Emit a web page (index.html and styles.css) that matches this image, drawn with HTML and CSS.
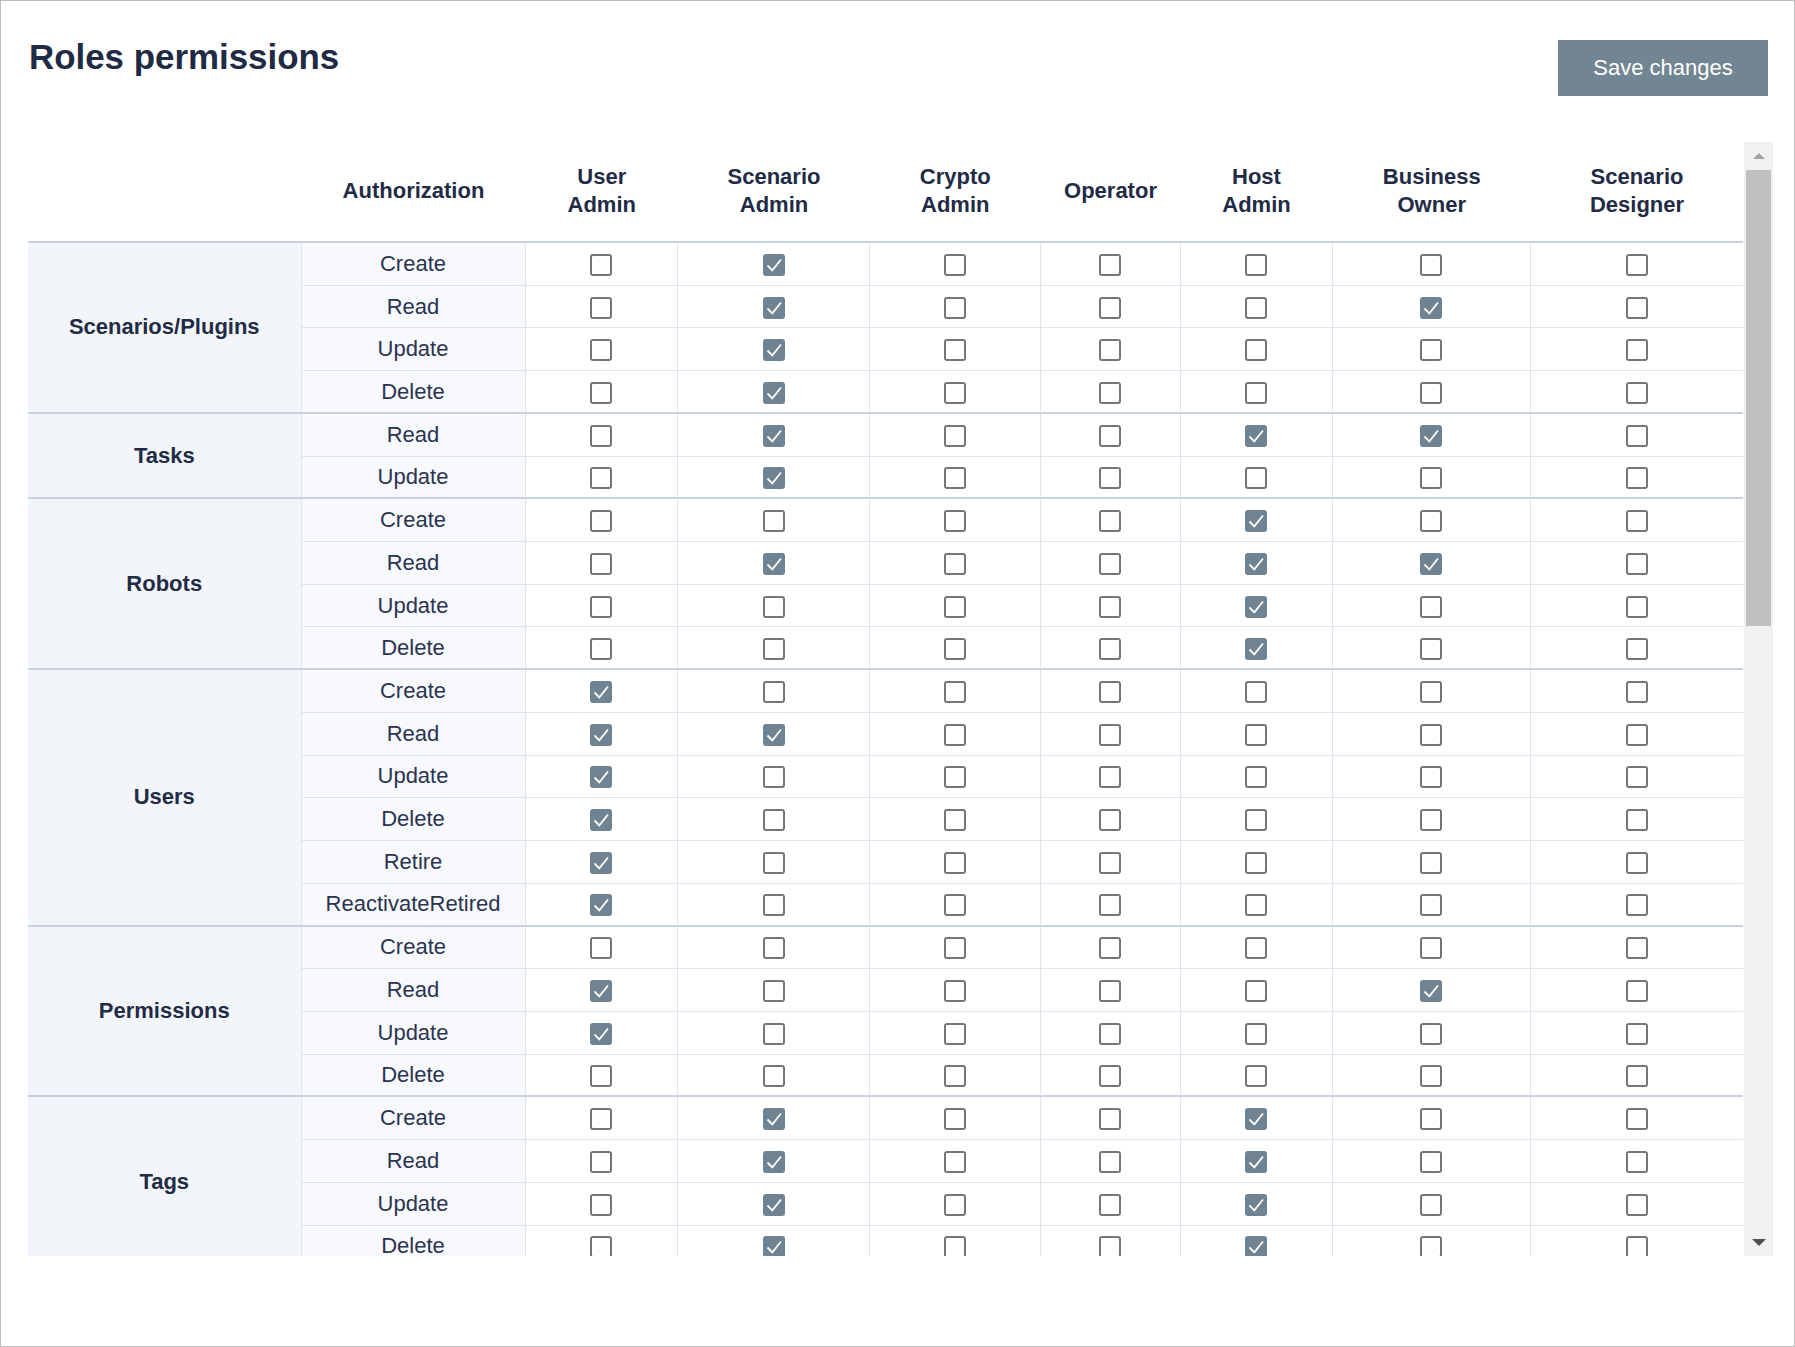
FILE: index.html
```html
<!DOCTYPE html>
<html lang="en">
<head>
<meta charset="utf-8">
<title>Roles permissions</title>
<link rel="stylesheet" href="styles.css">
</head>
<body>
<div class="page">
  <header class="top">
    <h1 class="title">Roles permissions</h1>
    <button class="save" type="button">Save changes</button>
  </header>
  <div class="scroller">
    <div class="clip">
      <div class="grid">
        <div class="th"></div>
        <div class="th">Authorization</div>
        <div class="th">User<br>Admin</div>
        <div class="th">Scenario<br>Admin</div>
        <div class="th">Crypto<br>Admin</div>
        <div class="th">Operator</div>
        <div class="th">Host<br>Admin</div>
        <div class="th">Business<br>Owner</div>
        <div class="th">Scenario<br>Designer</div>

        <div class="grp s4">Scenarios/Plugins</div>
        <div class="row"><div class="act">Create</div><div><span class="cb"></span></div><div><span class="cb on"><svg viewBox="0 0 18 18"><path d="M2.5 9.5 7.3 14.3 16 3.5"/></svg></span></div><div><span class="cb"></span></div><div><span class="cb"></span></div><div><span class="cb"></span></div><div><span class="cb"></span></div><div><span class="cb"></span></div></div>
        <div class="row"><div class="act">Read</div><div><span class="cb"></span></div><div><span class="cb on"><svg viewBox="0 0 18 18"><path d="M2.5 9.5 7.3 14.3 16 3.5"/></svg></span></div><div><span class="cb"></span></div><div><span class="cb"></span></div><div><span class="cb"></span></div><div><span class="cb on"><svg viewBox="0 0 18 18"><path d="M2.5 9.5 7.3 14.3 16 3.5"/></svg></span></div><div><span class="cb"></span></div></div>
        <div class="row"><div class="act">Update</div><div><span class="cb"></span></div><div><span class="cb on"><svg viewBox="0 0 18 18"><path d="M2.5 9.5 7.3 14.3 16 3.5"/></svg></span></div><div><span class="cb"></span></div><div><span class="cb"></span></div><div><span class="cb"></span></div><div><span class="cb"></span></div><div><span class="cb"></span></div></div>
        <div class="row end"><div class="act">Delete</div><div><span class="cb"></span></div><div><span class="cb on"><svg viewBox="0 0 18 18"><path d="M2.5 9.5 7.3 14.3 16 3.5"/></svg></span></div><div><span class="cb"></span></div><div><span class="cb"></span></div><div><span class="cb"></span></div><div><span class="cb"></span></div><div><span class="cb"></span></div></div>

        <div class="grp s2">Tasks</div>
        <div class="row"><div class="act">Read</div><div><span class="cb"></span></div><div><span class="cb on"><svg viewBox="0 0 18 18"><path d="M2.5 9.5 7.3 14.3 16 3.5"/></svg></span></div><div><span class="cb"></span></div><div><span class="cb"></span></div><div><span class="cb on"><svg viewBox="0 0 18 18"><path d="M2.5 9.5 7.3 14.3 16 3.5"/></svg></span></div><div><span class="cb on"><svg viewBox="0 0 18 18"><path d="M2.5 9.5 7.3 14.3 16 3.5"/></svg></span></div><div><span class="cb"></span></div></div>
        <div class="row end"><div class="act">Update</div><div><span class="cb"></span></div><div><span class="cb on"><svg viewBox="0 0 18 18"><path d="M2.5 9.5 7.3 14.3 16 3.5"/></svg></span></div><div><span class="cb"></span></div><div><span class="cb"></span></div><div><span class="cb"></span></div><div><span class="cb"></span></div><div><span class="cb"></span></div></div>

        <div class="grp s4">Robots</div>
        <div class="row"><div class="act">Create</div><div><span class="cb"></span></div><div><span class="cb"></span></div><div><span class="cb"></span></div><div><span class="cb"></span></div><div><span class="cb on"><svg viewBox="0 0 18 18"><path d="M2.5 9.5 7.3 14.3 16 3.5"/></svg></span></div><div><span class="cb"></span></div><div><span class="cb"></span></div></div>
        <div class="row"><div class="act">Read</div><div><span class="cb"></span></div><div><span class="cb on"><svg viewBox="0 0 18 18"><path d="M2.5 9.5 7.3 14.3 16 3.5"/></svg></span></div><div><span class="cb"></span></div><div><span class="cb"></span></div><div><span class="cb on"><svg viewBox="0 0 18 18"><path d="M2.5 9.5 7.3 14.3 16 3.5"/></svg></span></div><div><span class="cb on"><svg viewBox="0 0 18 18"><path d="M2.5 9.5 7.3 14.3 16 3.5"/></svg></span></div><div><span class="cb"></span></div></div>
        <div class="row"><div class="act">Update</div><div><span class="cb"></span></div><div><span class="cb"></span></div><div><span class="cb"></span></div><div><span class="cb"></span></div><div><span class="cb on"><svg viewBox="0 0 18 18"><path d="M2.5 9.5 7.3 14.3 16 3.5"/></svg></span></div><div><span class="cb"></span></div><div><span class="cb"></span></div></div>
        <div class="row end"><div class="act">Delete</div><div><span class="cb"></span></div><div><span class="cb"></span></div><div><span class="cb"></span></div><div><span class="cb"></span></div><div><span class="cb on"><svg viewBox="0 0 18 18"><path d="M2.5 9.5 7.3 14.3 16 3.5"/></svg></span></div><div><span class="cb"></span></div><div><span class="cb"></span></div></div>

        <div class="grp s6">Users</div>
        <div class="row"><div class="act">Create</div><div><span class="cb on"><svg viewBox="0 0 18 18"><path d="M2.5 9.5 7.3 14.3 16 3.5"/></svg></span></div><div><span class="cb"></span></div><div><span class="cb"></span></div><div><span class="cb"></span></div><div><span class="cb"></span></div><div><span class="cb"></span></div><div><span class="cb"></span></div></div>
        <div class="row"><div class="act">Read</div><div><span class="cb on"><svg viewBox="0 0 18 18"><path d="M2.5 9.5 7.3 14.3 16 3.5"/></svg></span></div><div><span class="cb on"><svg viewBox="0 0 18 18"><path d="M2.5 9.5 7.3 14.3 16 3.5"/></svg></span></div><div><span class="cb"></span></div><div><span class="cb"></span></div><div><span class="cb"></span></div><div><span class="cb"></span></div><div><span class="cb"></span></div></div>
        <div class="row"><div class="act">Update</div><div><span class="cb on"><svg viewBox="0 0 18 18"><path d="M2.5 9.5 7.3 14.3 16 3.5"/></svg></span></div><div><span class="cb"></span></div><div><span class="cb"></span></div><div><span class="cb"></span></div><div><span class="cb"></span></div><div><span class="cb"></span></div><div><span class="cb"></span></div></div>
        <div class="row"><div class="act">Delete</div><div><span class="cb on"><svg viewBox="0 0 18 18"><path d="M2.5 9.5 7.3 14.3 16 3.5"/></svg></span></div><div><span class="cb"></span></div><div><span class="cb"></span></div><div><span class="cb"></span></div><div><span class="cb"></span></div><div><span class="cb"></span></div><div><span class="cb"></span></div></div>
        <div class="row"><div class="act">Retire</div><div><span class="cb on"><svg viewBox="0 0 18 18"><path d="M2.5 9.5 7.3 14.3 16 3.5"/></svg></span></div><div><span class="cb"></span></div><div><span class="cb"></span></div><div><span class="cb"></span></div><div><span class="cb"></span></div><div><span class="cb"></span></div><div><span class="cb"></span></div></div>
        <div class="row end"><div class="act">ReactivateRetired</div><div><span class="cb on"><svg viewBox="0 0 18 18"><path d="M2.5 9.5 7.3 14.3 16 3.5"/></svg></span></div><div><span class="cb"></span></div><div><span class="cb"></span></div><div><span class="cb"></span></div><div><span class="cb"></span></div><div><span class="cb"></span></div><div><span class="cb"></span></div></div>

        <div class="grp s4">Permissions</div>
        <div class="row"><div class="act">Create</div><div><span class="cb"></span></div><div><span class="cb"></span></div><div><span class="cb"></span></div><div><span class="cb"></span></div><div><span class="cb"></span></div><div><span class="cb"></span></div><div><span class="cb"></span></div></div>
        <div class="row"><div class="act">Read</div><div><span class="cb on"><svg viewBox="0 0 18 18"><path d="M2.5 9.5 7.3 14.3 16 3.5"/></svg></span></div><div><span class="cb"></span></div><div><span class="cb"></span></div><div><span class="cb"></span></div><div><span class="cb"></span></div><div><span class="cb on"><svg viewBox="0 0 18 18"><path d="M2.5 9.5 7.3 14.3 16 3.5"/></svg></span></div><div><span class="cb"></span></div></div>
        <div class="row"><div class="act">Update</div><div><span class="cb on"><svg viewBox="0 0 18 18"><path d="M2.5 9.5 7.3 14.3 16 3.5"/></svg></span></div><div><span class="cb"></span></div><div><span class="cb"></span></div><div><span class="cb"></span></div><div><span class="cb"></span></div><div><span class="cb"></span></div><div><span class="cb"></span></div></div>
        <div class="row end"><div class="act">Delete</div><div><span class="cb"></span></div><div><span class="cb"></span></div><div><span class="cb"></span></div><div><span class="cb"></span></div><div><span class="cb"></span></div><div><span class="cb"></span></div><div><span class="cb"></span></div></div>

        <div class="grp s4">Tags</div>
        <div class="row"><div class="act">Create</div><div><span class="cb"></span></div><div><span class="cb on"><svg viewBox="0 0 18 18"><path d="M2.5 9.5 7.3 14.3 16 3.5"/></svg></span></div><div><span class="cb"></span></div><div><span class="cb"></span></div><div><span class="cb on"><svg viewBox="0 0 18 18"><path d="M2.5 9.5 7.3 14.3 16 3.5"/></svg></span></div><div><span class="cb"></span></div><div><span class="cb"></span></div></div>
        <div class="row"><div class="act">Read</div><div><span class="cb"></span></div><div><span class="cb on"><svg viewBox="0 0 18 18"><path d="M2.5 9.5 7.3 14.3 16 3.5"/></svg></span></div><div><span class="cb"></span></div><div><span class="cb"></span></div><div><span class="cb on"><svg viewBox="0 0 18 18"><path d="M2.5 9.5 7.3 14.3 16 3.5"/></svg></span></div><div><span class="cb"></span></div><div><span class="cb"></span></div></div>
        <div class="row"><div class="act">Update</div><div><span class="cb"></span></div><div><span class="cb on"><svg viewBox="0 0 18 18"><path d="M2.5 9.5 7.3 14.3 16 3.5"/></svg></span></div><div><span class="cb"></span></div><div><span class="cb"></span></div><div><span class="cb on"><svg viewBox="0 0 18 18"><path d="M2.5 9.5 7.3 14.3 16 3.5"/></svg></span></div><div><span class="cb"></span></div><div><span class="cb"></span></div></div>
        <div class="row end"><div class="act">Delete</div><div><span class="cb"></span></div><div><span class="cb on"><svg viewBox="0 0 18 18"><path d="M2.5 9.5 7.3 14.3 16 3.5"/></svg></span></div><div><span class="cb"></span></div><div><span class="cb"></span></div><div><span class="cb on"><svg viewBox="0 0 18 18"><path d="M2.5 9.5 7.3 14.3 16 3.5"/></svg></span></div><div><span class="cb"></span></div><div><span class="cb"></span></div></div>
      </div>
    </div>
    <div class="sb">
      <div class="sb-btn up"></div>
      <div class="sb-track"><div class="sb-thumb"></div></div>
      <div class="sb-btn down"></div>
    </div>
  </div>
</div>
</body>
</html>
```

FILE: styles.css
```css
* { box-sizing: border-box; }

html, body {
  margin: 0;
  padding: 0;
}

body {
  font-family: "Liberation Sans", Arial, sans-serif;
  color: #222b45;
  background: #ffffff;
}

.page {
  width: 1795px;
  height: 1347px;
  border: 1px solid #bdbdbd;
  padding: 0 21px 0 27px;
  overflow: hidden;
}

.top {
  display: flex;
  justify-content: space-between;
  align-items: flex-start;
}

.title {
  margin: 35.7px 0 0 1px;
  font-size: 34.9px;
  line-height: 40px;
  font-weight: 700;
  color: #1f2a44;
}

.save {
  margin: 39px 5px 0 0;
  width: 210px;
  height: 56px;
  padding: 0;
  border: 0;
  border-radius: 0;
  background: #728592;
  color: #ffffff;
  font-family: "Liberation Sans", Arial, sans-serif;
  font-size: 22px;
}

.scroller {
  margin-top: 46px;
  display: flex;
  height: 1114px;
}

.clip {
  flex: 1;
  overflow: hidden;
}

.grid {
  display: grid;
  grid-template-columns: 273.5px 224px 152.5px 192px 170.5px 140px 152px 198.5px 212px;
  grid-template-rows: 101px;
  grid-auto-rows: 42.73px;
  font-size: 22px;
  line-height: 26px;
}

.th {
  display: flex;
  align-items: center;
  justify-content: center;
  text-align: center;
  font-weight: 700;
  line-height: 27.5px;
  padding-bottom: 2px;
  border-bottom: 2px solid #c7d1e0;
}

.grp {
  display: flex;
  align-items: center;
  justify-content: center;
  background: #f2f5fa;
  font-weight: 700;
  border-right: 1px solid #dde4ee;
  border-bottom: 2px solid #c7d1e0;
}

.s2 { grid-row: span 2; }
.s4 { grid-row: span 4; }
.s6 { grid-row: span 6; }

.row { display: contents; }

.row > div {
  display: flex;
  align-items: center;
  justify-content: center;
  border-right: 1px solid #dde4ee;
  border-bottom: 1px solid #dde4ee;
}

.row > div:last-child { border-right: 0; }

.row.end > div { border-bottom: 2px solid #c7d1e0; }

.row > .act {
  background: #f8f9fc;
  color: #2a3450;
}

.cb {
  display: block;
  width: 22px;
  height: 22px;
  margin-top: 2px;
  border: 2px solid #767676;
  border-radius: 3px;
  background: #ffffff;
}

.cb.on {
  background: #6f8392;
  border-color: #6f8392;
}

.cb svg {
  display: block;
  width: 18px;
  height: 18px;
  fill: none;
  stroke: #ffffff;
  stroke-width: 1.8;
}

.sb {
  width: 29px;
  background: #f1f1f1;
  display: flex;
  flex-direction: column;
}

.sb-btn {
  height: 28px;
  display: flex;
  align-items: center;
  justify-content: center;
}

.up::before {
  content: "";
  border-left: 6.5px solid transparent;
  border-right: 6.5px solid transparent;
  border-bottom: 6px solid #a3a3a3;
}

.down::before {
  content: "";
  border-left: 7px solid transparent;
  border-right: 7px solid transparent;
  border-top: 7px solid #505050;
}

.sb-track {
  flex: 1;
  padding: 0 2px;
}

.sb-thumb {
  height: 456px;
  background: #c1c1c1;
}
```
